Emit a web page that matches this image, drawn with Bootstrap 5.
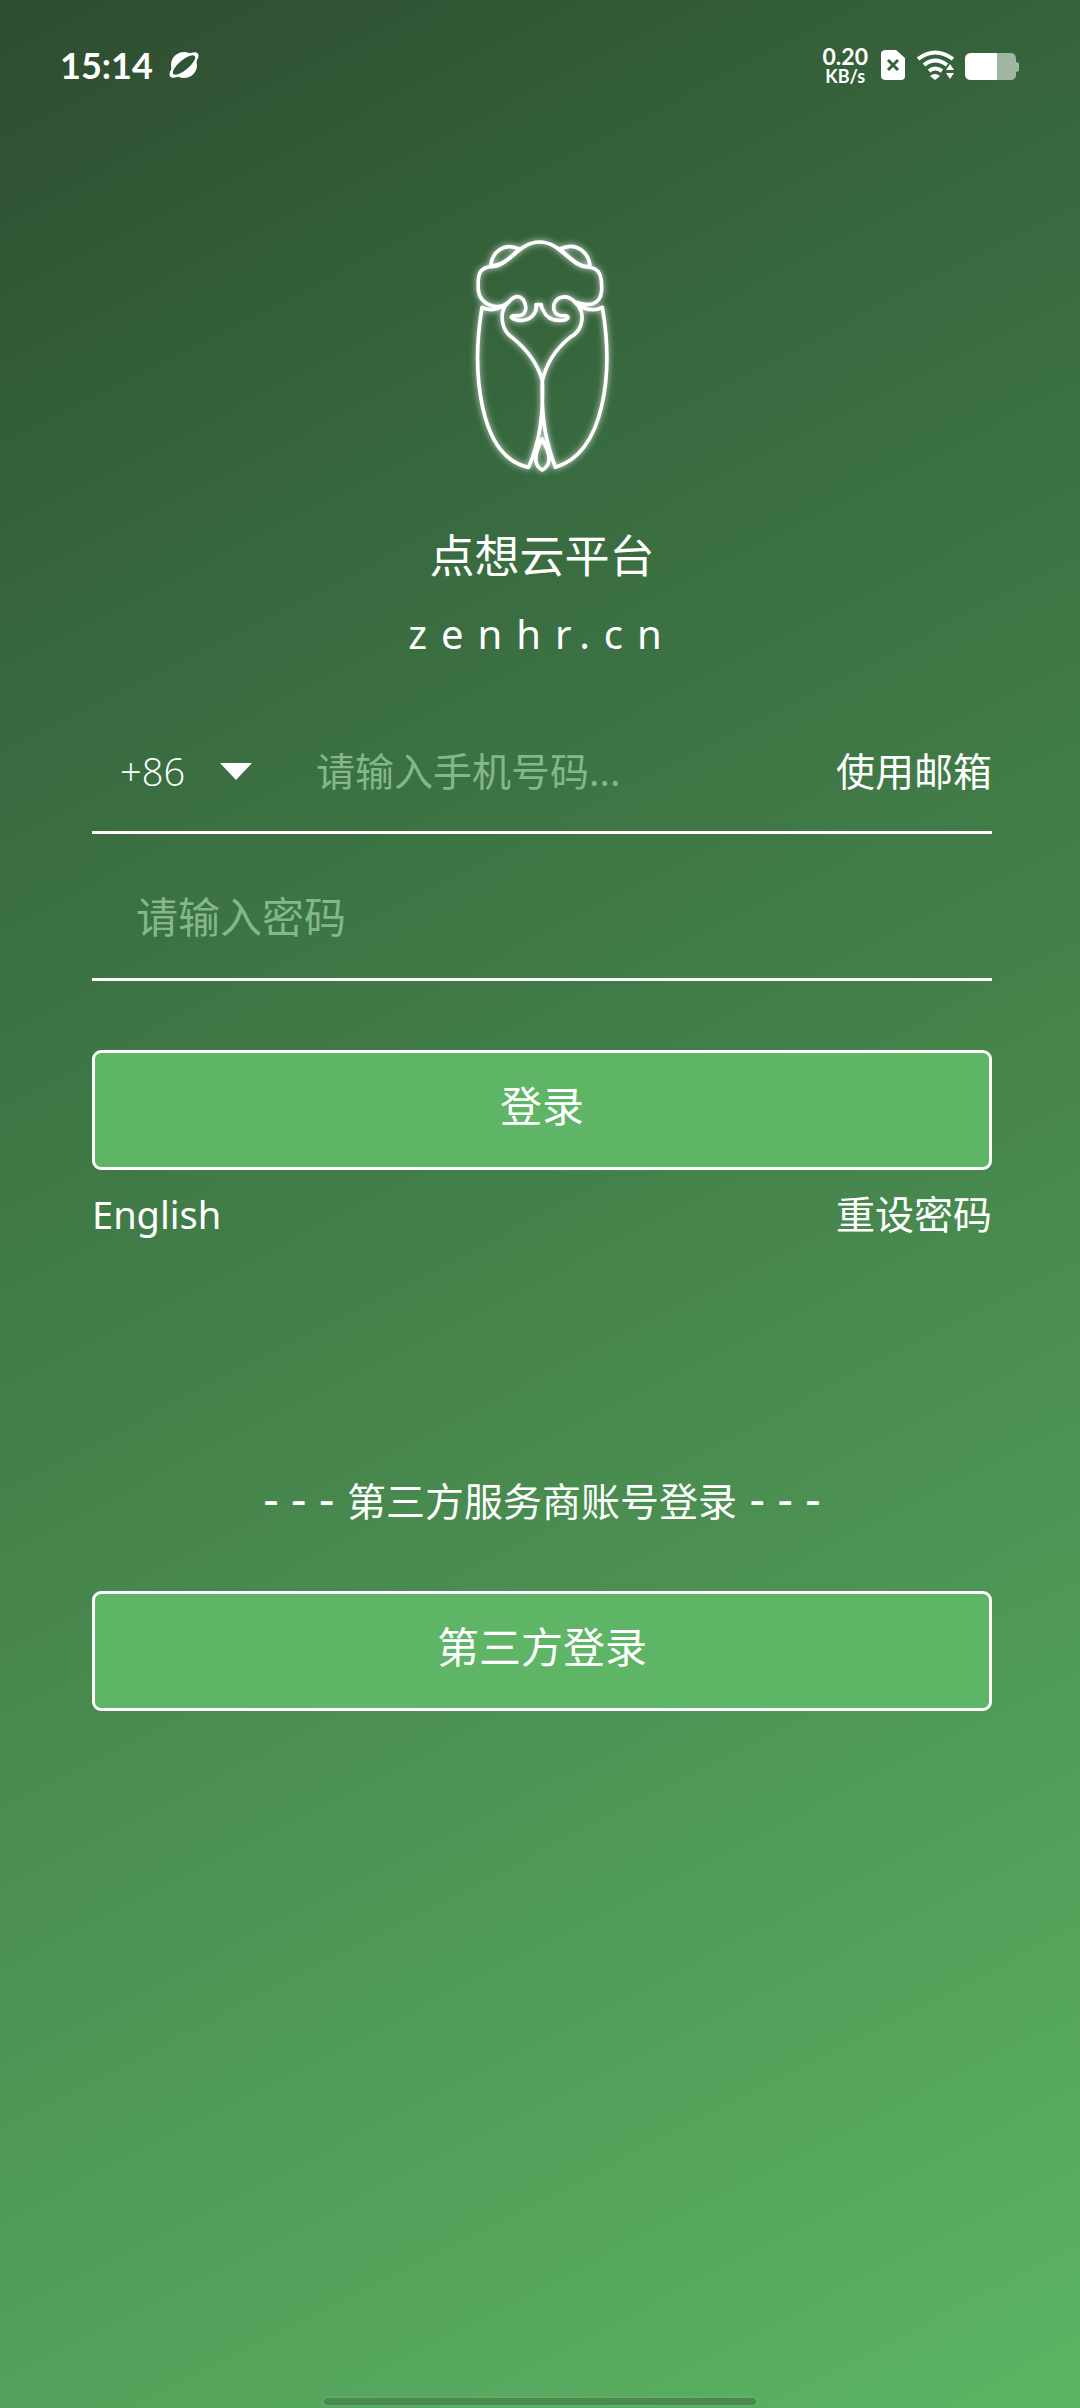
<!DOCTYPE html>
<html lang="zh-CN">
<head>
<meta charset="utf-8">
<meta name="viewport" content="width=device-width, initial-scale=1">
<title>点想云平台</title>
<link href="https://cdn.jsdelivr.net/npm/bootstrap@5.3.0/dist/css/bootstrap.min.css" rel="stylesheet">
<style>
body{min-height:100vh;color:#fff;font-family:"Noto Sans","Noto Sans CJK SC",sans-serif;font-size:39px;line-height:60px;background:linear-gradient(153deg,#2e4d30 0%,#386a3f 25%,#44814a 50%,#5cb464 100%)}
a,a:hover{color:#fff;text-decoration:none}
.status-bar{height:130px;padding:0 60px}
.clock{font:700 36px/48px Lato,sans-serif}
.net-speed{font:700 23px/22px Lato,sans-serif}
.net-speed .unit{display:block;font-size:18px;line-height:18px}
.brand-logo{width:180px;height:270px;margin-top:90px}
.brand-name{font-size:45px;line-height:68px;margin:32px 0 0}
.brand-site{font-size:40px;letter-spacing:14px;margin-top:14px}
.login-area{padding:0 88px 0 92px}
.field-row{border-bottom:3px solid #fff}
.field-row.phone{height:124px;margin-top:46px}
.field-row.secret{height:147px;padding:22px 44px 0}
.code-box{margin-right:44px}
.code-select{width:180px;padding-left:28px;appearance:none;background:none;border:0;color:#fff;font:300 38px/60px "Open Sans",sans-serif}
.code-arrow{right:20px;top:22px;pointer-events:none}
.plain-input,.plain-input:focus{background:none;border:0;box-shadow:none;color:#fff;font-size:39px;line-height:60px;padding:0}
.plain-input.secret-input{font-size:42px}
.plain-input::placeholder{color:#84b78a;opacity:1}
.btn-login{height:120px;padding:0 0 8px;border:3px solid #fff;border-radius:9px;background:#5db565;color:#fff;font-size:42px;line-height:60px}
.btn-login:hover,.btn-login:active{background:#54a85c!important;color:#fff!important;border-color:#fff!important}
.submit-block{padding-top:69px}
.help-links{margin-top:14px}
.lang-link{font-size:38px}
.third-party{margin-top:224px}
.third-title{margin-bottom:60px}
.dashes{font-size:48px}
.home-line{width:432px;height:7px;border-radius:4px;background:#4b8852;box-shadow:0 0 3px #78bb7e;margin-bottom:3px}
</style>
<script src="https://cdn.jsdelivr.net/npm/bootstrap@5.3.0/dist/js/bootstrap.bundle.min.js"></script>
</head>
<body class="d-flex flex-column">
<header class="status-bar d-flex align-items-center justify-content-between">
  <div class="d-flex align-items-center gap-3">
    <span class="clock">15:14</span>
    <svg width="30" height="28" viewBox="0 0 30 28" aria-hidden="true">
      <mask id="ring"><rect width="30" height="28" fill="#fff"/><ellipse cx="15" cy="14" rx="14" ry="5" transform="rotate(-40 15 14)" fill="#000"/></mask>
      <g mask="url(#ring)" fill="#fff"><circle cx="15" cy="14" r="13"/><ellipse cx="15" cy="14" rx="18" ry="7" transform="rotate(-40 15 14)"/></g>
    </svg>
  </div>
  <div class="d-flex align-items-center">
    <div class="net-speed text-center me-2">0.20<span class="unit">KB/s</span></div>
    <svg class="ms-1" width="140" height="34" viewBox="881 0 140 34" aria-hidden="true">
      <path d="M887 2h10l9 8v18q0 4-4 4h-15q-5 0-5-4V6q0-4 5-4Z" fill="#fff"/><path d="m889 12 10 10m0-10-10 10" stroke="#36613a" stroke-width="3"/>
      <g fill="none" stroke="#fff" stroke-width="4"><path d="M919 11q17-13 35 0"/><path d="M925 17q11-9 23 0"/><path d="M930 23q6-5 13 0"/></g>
      <path d="m931 28q5-4 10 0l-5 4ZM947 22l4-6 4 6Zm0 3h8l-4 6Z" fill="#fff"/>
      <path d="M998 5h14q4 0 5 5v4l3 1v8l-3 1v4q-1 4-5 4h-14Z" fill="#9fb7a2"/><path d="M998 5v27h-26q-6 0-6-6V11q0-6 6-6Z" fill="#fff"/>
    </svg>
  </div>
</header>
<main class="login-area flex-grow-1">
  <section class="text-center">
    <svg class="brand-logo" viewBox="9 0 540 810" fill="none" stroke="#fff" stroke-width="11" stroke-linejoin="round" stroke-linecap="round" role="img" aria-label="点想云平台">
      <defs><filter id="halo" x="-20%" y="-20%" width="140%" height="140%"><feGaussianBlur stdDeviation="10"/></filter>
      <g id="cicada"><path d="M174 252C145 270 92 255 88 210C85 162 91 141 132 139C176 139 210 66 272 66C335 66 365 139 414 141C453 143 459 167 458 210C455 257 419 260 378 246C350 217 313 233 314 265C317 284 328 288 350 287C366 292 351 302 334 301C305 302 290 287 283 272Q277 264 277 254H261Q264 272 251 287C237 303 212 304 194 297C180 291 188 285 207 287C231 287 237 261 222 238C204 221 187 234 174 252Z"/>
      <path d="M125 137C128 102 161 64 211 87C183 118 154 139 125 137ZM333 87C385 62 420 101 423 139C395 143 367 119 333 87Z"/>
      <path d="M174 250C150 278 155 332 193 355C235 390 266 430 280 482C293 426 322 385 363 352C405 330 411 276 378 247M99 262C67 455 90 711 239 742C269 669 284 599 280 482M460 262C493 452 470 697 319 742C292 668 276 600 280 482M99 262Q133 280 174 250M379 247Q421 282 460 262M279 657Q241 731 280 750Q321 728 279 657"/></g></defs>
      <use href="#cicada" filter="url(#halo)" opacity=".8"/><use href="#cicada"/>
    </svg>
    <h1 class="brand-name fw-normal">点想云平台</h1>
    <div class="brand-site">zenhr.cn</div>
  </section>
  <form onsubmit="return false">
    <div class="field-row phone d-flex align-items-center">
      <div class="code-box position-relative">
        <select class="code-select d-block" aria-label="国家区号"><option>+86</option></select>
        <svg class="code-arrow position-absolute" width="32" height="17" viewBox="0 0 32 17"><path d="M0 0h32L16 17Z" fill="#fff"/></svg>
      </div>
      <input class="form-control plain-input" type="tel" aria-label="手机号码" placeholder="请输入手机号码...">
      <a class="text-nowrap" href="#">使用邮箱</a>
    </div>
    <div class="field-row secret d-flex align-items-center">
      <input class="form-control plain-input secret-input" type="password" aria-label="密码" placeholder="请输入密码">
    </div>
    <div class="submit-block"><button class="btn btn-login d-block w-100" type="submit">登录</button></div>
    <div class="help-links d-flex justify-content-between"><a class="lang-link" href="#">English</a><a href="#">重设密码</a></div>
  </form>
  <section class="third-party text-center">
    <p class="third-title"><span class="dashes">- - - </span>第三方服务商账号登录<span class="dashes"> - - -</span></p>
    <button class="btn btn-login d-block w-100" type="button">第三方登录</button>
  </section>
</main>
<footer class="d-flex justify-content-center"><div class="home-line"></div></footer>
</body>
</html>
